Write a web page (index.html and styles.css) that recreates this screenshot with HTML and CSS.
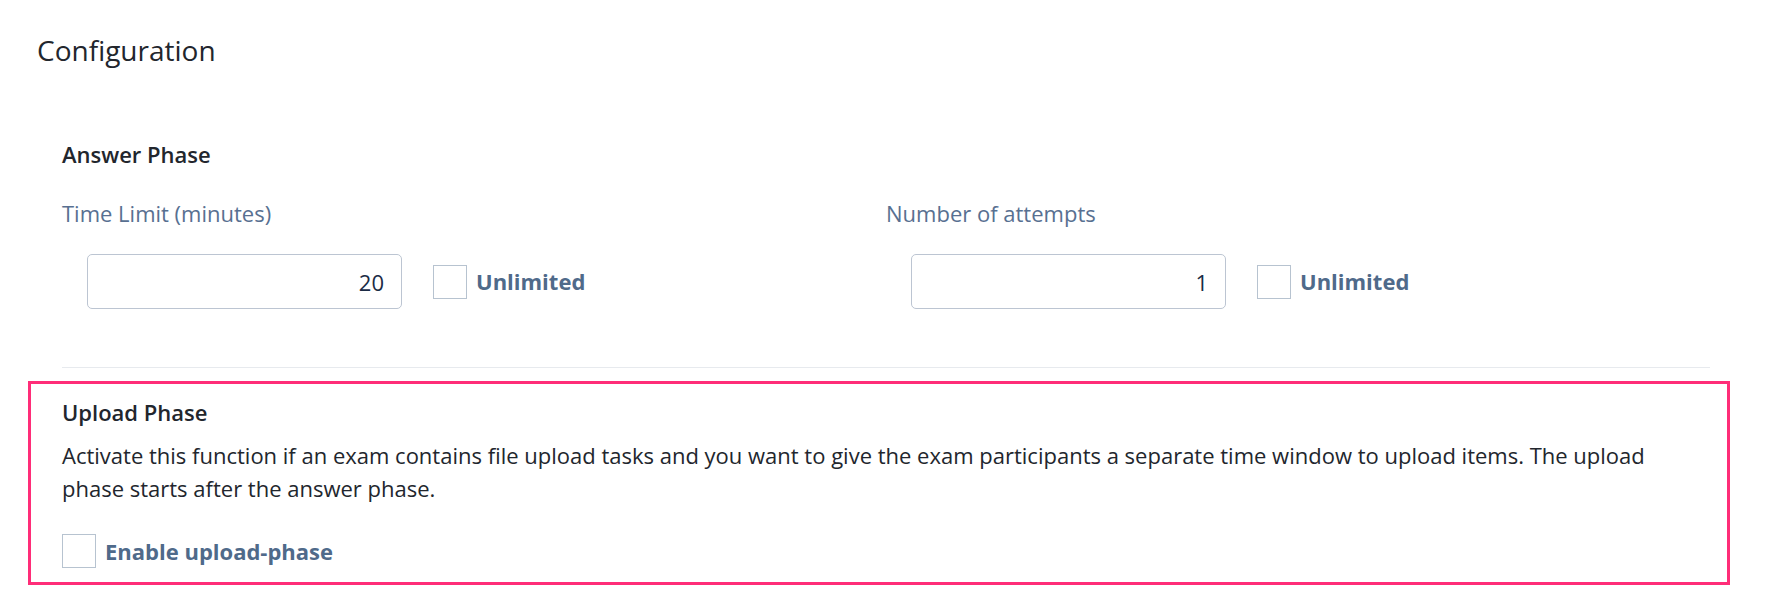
FILE: index.html
```html
<!DOCTYPE html>
<html lang="en">
<head>
<meta charset="utf-8">
<title>Configuration</title>
<link rel="stylesheet" href="styles.css">
</head>
<body>
<div class="page">
  <h1 class="title">Configuration</h1>
  <div class="content">
    <section class="answer">
      <h2 class="section-title">Answer Phase</h2>
      <div class="fields">
        <div class="field">
          <label class="field-label" for="time">Time Limit (minutes)</label>
          <div class="field-row">
            <input id="time" class="num-input" type="text" value="20">
            <label class="check"><input type="checkbox" class="box"><span class="check-text">Unlimited</span></label>
          </div>
        </div>
        <div class="field">
          <label class="field-label" for="attempts">Number of attempts</label>
          <div class="field-row">
            <input id="attempts" class="num-input" type="text" value="1">
            <label class="check"><input type="checkbox" class="box"><span class="check-text">Unlimited</span></label>
          </div>
        </div>
      </div>
    </section>
    <hr class="divider">
    <section class="upload">
      <h2 class="section-title">Upload Phase</h2>
      <p class="desc">Activate this function if an exam contains file upload tasks and you want to give the exam participants a separate time window to upload items. The upload phase starts after the answer phase.</p>
      <label class="check check-upload"><input type="checkbox" class="box"><span class="check-text">Enable upload-phase</span></label>
    </section>
  </div>
</div>
</body>
</html>
```
FILE: styles.css
```css
* { box-sizing: border-box; }
html, body { margin: 0; padding: 0; background: #ffffff; }
body {
  font-family: "Open Sans", "Noto Sans", "Liberation Sans", sans-serif;
  color: #22262d;
  font-size: 22px;
  line-height: 33px;
}
.page {
  padding: 34px 0 0 37px;
}
.title {
  margin: 0;
  font-size: 28px;
  line-height: 33px;
  font-weight: 400;
  color: #22262d;
}
.content {
  width: 1673px;
  padding-left: 25px;
}
.answer { margin-top: 71px; }
.section-title {
  margin: 0;
  font-size: 22px;
  line-height: 33px;
  font-weight: 600;
  color: #22262d;
}
.fields {
  margin-top: 26px;
  display: grid;
  grid-template-columns: 824px 824px;
}
.field-label {
  display: block;
  color: #587091;
  font-weight: 400;
}
.field-row {
  margin-top: 24px;
  display: flex;
  align-items: center;
}
.num-input {
  margin: 0 0 0 25px;
  width: 315px;
  height: 55px;
  border: 1px solid #bcc5d2;
  border-radius: 5px;
  padding: 0 17px 0 12px;
  text-align: right;
  font-family: inherit;
  font-size: 22px;
  color: #1b2b45;
  background: #fff;
  outline: none;
}
.check {
  display: flex;
  align-items: center;
  gap: 9px;
}
.field-row .check { margin-left: 31px; }
.box {
  appearance: none;
  -webkit-appearance: none;
  margin: 0;
  width: 34px;
  height: 34px;
  border: 1px solid #b7c3d0;
  border-radius: 0;
  background: #fff;
}
.check-text {
  font-weight: 700;
  color: #4f6a8a;
}
.divider {
  margin: 58px 0 0 0;
  width: 1648px;
  height: 1px;
  border: 0;
  background: #e7eaee;
}
.upload {
  margin: 13px -20px 0 -34px;
  width: 1702px;
  border: 3px solid #ff2d78;
  padding: 12px 17px 14px 31px;
}
.desc {
  margin: 10px 0 0 0;
  color: #22262d;
}
.check-upload { margin-top: 29px; }
```
